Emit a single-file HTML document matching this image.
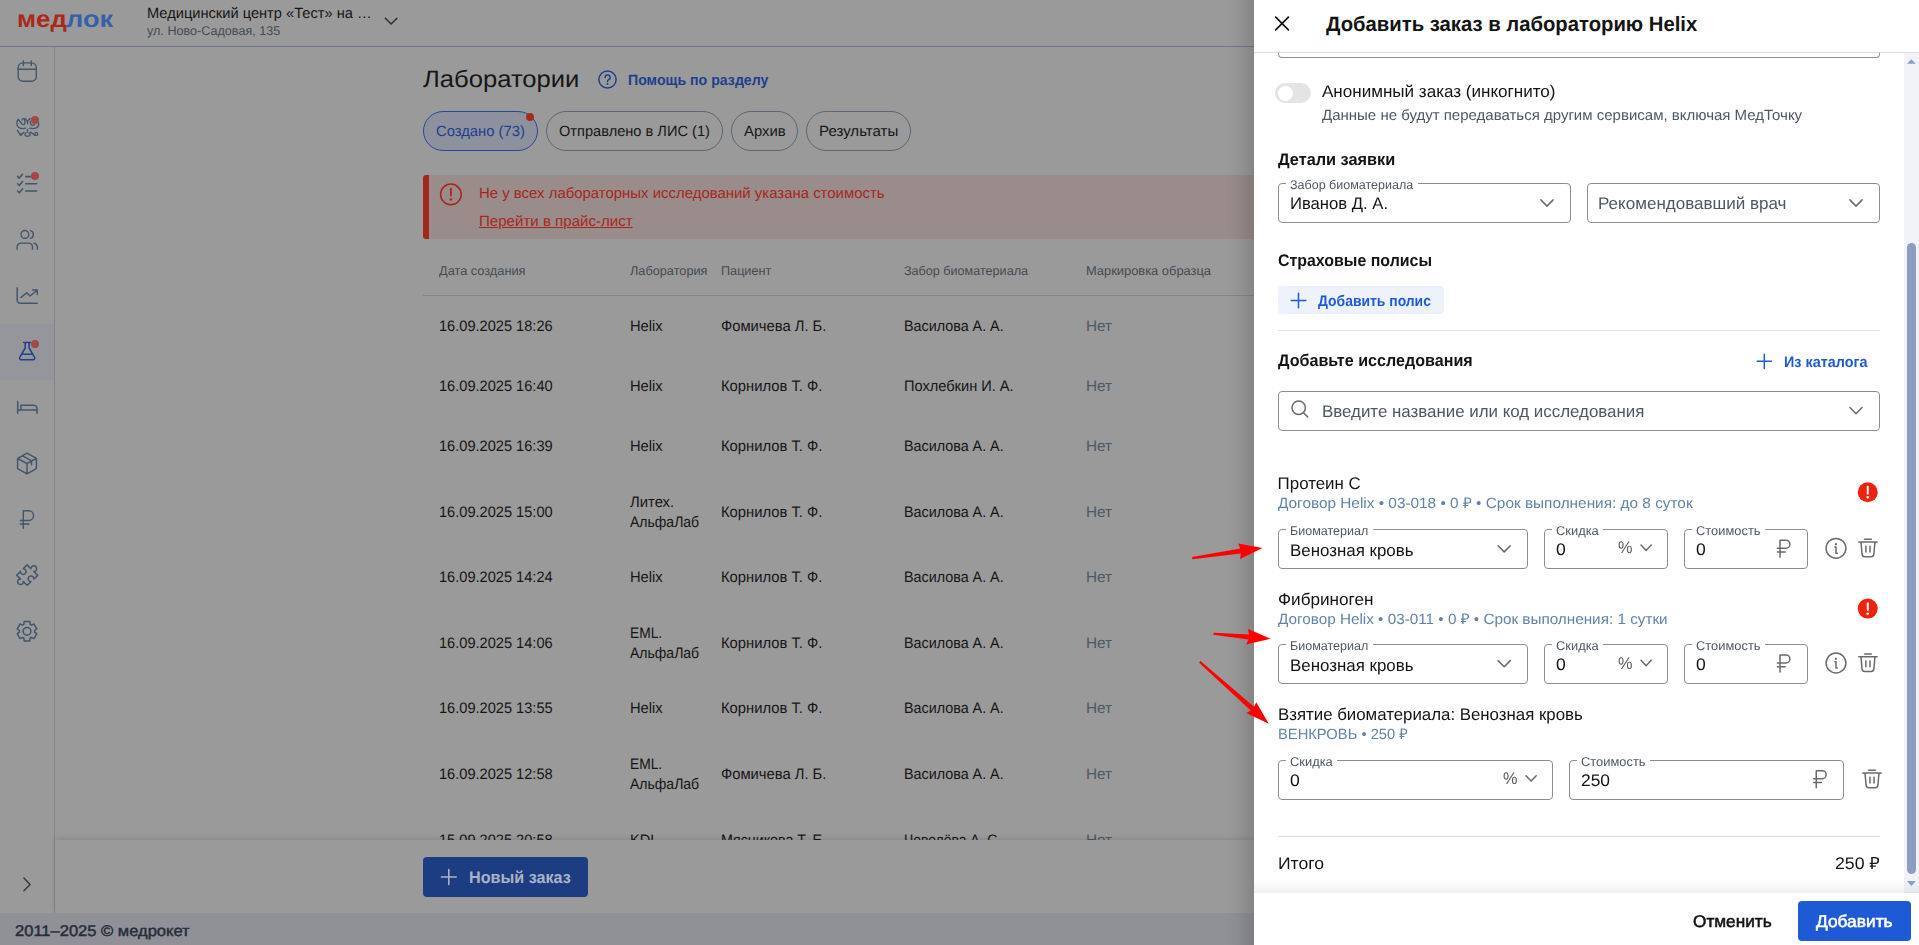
<!DOCTYPE html>
<html lang="ru"><head><meta charset="utf-8"><title>МедЛок — Лаборатории</title>
<style>
html,body{margin:0;padding:0;}
body{width:1919px;height:945px;overflow:hidden;position:relative;background:#9a9a9a;font-family:"Liberation Sans",sans-serif;}
.t{position:absolute;white-space:nowrap;line-height:1;transform-origin:0 0;display:block;text-rendering:geometricPrecision;}
.a{position:absolute;box-sizing:border-box;}
.g{position:absolute;left:0;top:0;width:0;height:0;will-change:transform;}
.g0{position:absolute;left:0;top:0;width:0;height:0;}
.pill{position:absolute;box-sizing:border-box;height:40px;top:111px;border:1px solid #5d6673;border-radius:20px;}
.fld{position:absolute;box-sizing:border-box;height:40px;border:1px solid #8d8d8d;border-radius:4px;background:#fff;}
.notch{position:absolute;height:3px;background:#fff;}
svg{position:absolute;left:0;top:0;overflow:visible;}
</style></head>
<body>
<!-- ===== dimmed application behind the drawer ===== -->
<div class="a" style="left:0;top:46px;width:1254px;height:1px;background:#6d7a92"></div>
<div class="a" style="left:0;top:324px;width:54px;height:56px;background:#94969b"></div>
<div class="a" style="left:54px;top:47px;width:1px;height:866px;background:#83868b"></div>
<div class="pill" style="left:423px;width:115px;border-color:#27489b;background:#8c919d"></div>
<div class="pill" style="left:546px;width:177px"></div>
<div class="pill" style="left:731px;width:67px"></div>
<div class="pill" style="left:806px;width:105px"></div>
<div class="a" style="left:526px;top:113px;width:8px;height:8px;border-radius:4px;background:#a8281d"></div>
<div class="a" style="left:423px;top:175px;width:831px;height:64px;background:#998c8b;border-left:6px solid #a3271c;border-radius:3px 0 0 3px"></div>
<div class="a" style="left:423px;top:295px;width:831px;height:1px;background:#868686"></div>
<div class="g0">
<span class="t" style="left:147.00px;top:6.75px;font-size:14.8px;color:#161616;transform:scaleX(0.9892);">Медицинский центр «Тест» на …</span>
<span class="t" style="left:147.00px;top:25.00px;font-size:12.7px;color:#454a52;transform:scaleX(0.9931);">ул. Ново-Садовая, 135</span>
<span class="t" style="left:16.60px;top:9.30px;font-size:23.6px;color:#ab281b;font-weight:bold;transform:scaleX(1.0934);">мед</span>
<span class="t" style="left:65.70px;top:9.30px;font-size:23.6px;color:#3760a9;font-weight:bold;transform:scaleX(1.1542);">лок</span>
<span class="t" style="left:423.40px;top:69.30px;font-size:23.7px;color:#161616;transform:scaleX(1.0811);">Лаборатории</span>
<span class="t" style="left:627.60px;top:73.00px;font-size:15.0px;color:#1f3f8c;font-weight:bold;transform:scaleX(0.9427);">Помощь по разделу</span>
<span class="t" style="left:436.00px;top:125.00px;font-size:14.8px;color:#1f3f8c;">Создано (73)</span>
<span class="t" style="left:558.80px;top:125.00px;font-size:14.8px;color:#161616;transform:scaleX(0.9871);">Отправлено в ЛИС (1)</span>
<span class="t" style="left:743.80px;top:125.00px;font-size:14.8px;color:#161616;transform:scaleX(1.0041);">Архив</span>
<span class="t" style="left:818.80px;top:125.00px;font-size:14.8px;color:#161616;transform:scaleX(1.0173);">Результаты</span>
<span class="t" style="left:478.50px;top:187.20px;font-size:14.9px;color:#a8271c;transform:scaleX(1.0028);">Не у всех лабораторных исследований указана стоимость</span>
<span class="t" style="left:478.50px;top:214.80px;font-size:14.9px;color:#a8271c;text-decoration:underline;text-underline-offset:1px;text-decoration-thickness:1px;transform:scaleX(1.0121);">Перейти в прайс-лист</span>
<span class="t" style="left:438.80px;top:265.00px;font-size:12.7px;color:#454a52;transform:scaleX(1.0061);">Дата создания</span>
<span class="t" style="left:629.50px;top:265.00px;font-size:12.7px;color:#454a52;transform:scaleX(1.0030);">Лаборатория</span>
<span class="t" style="left:721.00px;top:265.00px;font-size:12.7px;color:#454a52;transform:scaleX(0.9971);">Пациент</span>
<span class="t" style="left:903.80px;top:265.00px;font-size:12.7px;color:#454a52;transform:scaleX(0.9927);">Забор биоматериала</span>
<span class="t" style="left:1085.60px;top:265.00px;font-size:12.7px;color:#454a52;transform:scaleX(1.0149);">Маркировка образца</span>
<span class="t" style="left:438.60px;top:319.25px;font-size:15.2px;color:#161616;transform:scaleX(0.9612);">16.09.2025 18:26</span>
<span class="t" style="left:630.10px;top:319.25px;font-size:15.2px;color:#161616;transform:scaleX(0.9673);">Helix</span>
<span class="t" style="left:721.10px;top:319.25px;font-size:15.2px;color:#161616;transform:scaleX(0.9721);">Фомичева Л. Б.</span>
<span class="t" style="left:903.60px;top:319.25px;font-size:15.2px;color:#161616;transform:scaleX(0.9435);">Василова А. А.</span>
<span class="t" style="left:1085.60px;top:319.25px;font-size:15.2px;color:#4e5965;transform:scaleX(1.0111);">Нет</span>
<span class="t" style="left:438.60px;top:379.25px;font-size:15.2px;color:#161616;transform:scaleX(0.9612);">16.09.2025 16:40</span>
<span class="t" style="left:630.10px;top:379.25px;font-size:15.2px;color:#161616;transform:scaleX(0.9673);">Helix</span>
<span class="t" style="left:721.10px;top:379.25px;font-size:15.2px;color:#161616;transform:scaleX(0.9734);">Корнилов Т. Ф.</span>
<span class="t" style="left:903.60px;top:379.25px;font-size:15.2px;color:#161616;transform:scaleX(0.9614);">Похлебкин И. А.</span>
<span class="t" style="left:1085.60px;top:379.25px;font-size:15.2px;color:#4e5965;transform:scaleX(1.0111);">Нет</span>
<span class="t" style="left:438.60px;top:439.25px;font-size:15.2px;color:#161616;transform:scaleX(0.9612);">16.09.2025 16:39</span>
<span class="t" style="left:630.10px;top:439.25px;font-size:15.2px;color:#161616;transform:scaleX(0.9673);">Helix</span>
<span class="t" style="left:721.10px;top:439.25px;font-size:15.2px;color:#161616;transform:scaleX(0.9734);">Корнилов Т. Ф.</span>
<span class="t" style="left:903.60px;top:439.25px;font-size:15.2px;color:#161616;transform:scaleX(0.9435);">Василова А. А.</span>
<span class="t" style="left:1085.60px;top:439.25px;font-size:15.2px;color:#4e5965;transform:scaleX(1.0111);">Нет</span>
<span class="t" style="left:438.60px;top:505.25px;font-size:15.2px;color:#161616;transform:scaleX(0.9612);">16.09.2025 15:00</span>
<span class="t" style="left:630.10px;top:495.25px;font-size:15.2px;color:#161616;transform:scaleX(0.9776);">Литех.</span>
<span class="t" style="left:630.10px;top:515.00px;font-size:15.2px;color:#161616;transform:scaleX(0.9225);">АльфаЛаб</span>
<span class="t" style="left:721.10px;top:505.25px;font-size:15.2px;color:#161616;transform:scaleX(0.9734);">Корнилов Т. Ф.</span>
<span class="t" style="left:903.60px;top:505.25px;font-size:15.2px;color:#161616;transform:scaleX(0.9435);">Василова А. А.</span>
<span class="t" style="left:1085.60px;top:505.25px;font-size:15.2px;color:#4e5965;transform:scaleX(1.0111);">Нет</span>
<span class="t" style="left:438.60px;top:570.25px;font-size:15.2px;color:#161616;transform:scaleX(0.9612);">16.09.2025 14:24</span>
<span class="t" style="left:630.10px;top:570.25px;font-size:15.2px;color:#161616;transform:scaleX(0.9673);">Helix</span>
<span class="t" style="left:721.10px;top:570.25px;font-size:15.2px;color:#161616;transform:scaleX(0.9734);">Корнилов Т. Ф.</span>
<span class="t" style="left:903.60px;top:570.25px;font-size:15.2px;color:#161616;transform:scaleX(0.9435);">Василова А. А.</span>
<span class="t" style="left:1085.60px;top:570.25px;font-size:15.2px;color:#4e5965;transform:scaleX(1.0111);">Нет</span>
<span class="t" style="left:438.60px;top:636.00px;font-size:15.2px;color:#161616;transform:scaleX(0.9612);">16.09.2025 14:06</span>
<span class="t" style="left:630.10px;top:626.00px;font-size:15.2px;color:#161616;transform:scaleX(0.9072);">EML.</span>
<span class="t" style="left:630.10px;top:645.75px;font-size:15.2px;color:#161616;transform:scaleX(0.9225);">АльфаЛаб</span>
<span class="t" style="left:721.10px;top:636.00px;font-size:15.2px;color:#161616;transform:scaleX(0.9734);">Корнилов Т. Ф.</span>
<span class="t" style="left:903.60px;top:636.00px;font-size:15.2px;color:#161616;transform:scaleX(0.9435);">Василова А. А.</span>
<span class="t" style="left:1085.60px;top:636.00px;font-size:15.2px;color:#4e5965;transform:scaleX(1.0111);">Нет</span>
<span class="t" style="left:438.60px;top:701.00px;font-size:15.2px;color:#161616;transform:scaleX(0.9612);">16.09.2025 13:55</span>
<span class="t" style="left:630.10px;top:701.00px;font-size:15.2px;color:#161616;transform:scaleX(0.9673);">Helix</span>
<span class="t" style="left:721.10px;top:701.00px;font-size:15.2px;color:#161616;transform:scaleX(0.9734);">Корнилов Т. Ф.</span>
<span class="t" style="left:903.60px;top:701.00px;font-size:15.2px;color:#161616;transform:scaleX(0.9435);">Василова А. А.</span>
<span class="t" style="left:1085.60px;top:701.00px;font-size:15.2px;color:#4e5965;transform:scaleX(1.0111);">Нет</span>
<span class="t" style="left:438.60px;top:767.00px;font-size:15.2px;color:#161616;transform:scaleX(0.9612);">16.09.2025 12:58</span>
<span class="t" style="left:630.10px;top:757.00px;font-size:15.2px;color:#161616;transform:scaleX(0.9072);">EML.</span>
<span class="t" style="left:630.10px;top:776.75px;font-size:15.2px;color:#161616;transform:scaleX(0.9225);">АльфаЛаб</span>
<span class="t" style="left:721.10px;top:767.00px;font-size:15.2px;color:#161616;transform:scaleX(0.9721);">Фомичева Л. Б.</span>
<span class="t" style="left:903.60px;top:767.00px;font-size:15.2px;color:#161616;transform:scaleX(0.9435);">Василова А. А.</span>
<span class="t" style="left:1085.60px;top:767.00px;font-size:15.2px;color:#4e5965;transform:scaleX(1.0111);">Нет</span>
<span class="t" style="left:438.60px;top:832.50px;font-size:15.2px;color:#161616;transform:scaleX(0.9612);">15.09.2025 20:58</span>
<span class="t" style="left:630.10px;top:832.50px;font-size:15.2px;color:#161616;transform:scaleX(0.9616);">KDL</span>
<span class="t" style="left:721.10px;top:832.50px;font-size:15.2px;color:#161616;transform:scaleX(0.9405);">Мясникова Т. Е.</span>
<span class="t" style="left:903.60px;top:832.50px;font-size:15.2px;color:#161616;transform:scaleX(0.9176);">Чевелёва А. С.</span>
<span class="t" style="left:1085.60px;top:832.50px;font-size:15.2px;color:#4e5965;transform:scaleX(1.0111);">Нет</span>
</div>
<div class="a" style="left:55px;top:840px;width:1199px;height:73px;background:#9a9a9a;box-shadow:0 -1px 5px rgba(0,0,0,.13)"></div>
<div class="a" style="left:423px;top:857px;width:165px;height:40px;border-radius:4px;background:#1d3d82"></div>
<div class="a" style="left:0;top:913px;width:1254px;height:32px;background:#8f9197"></div>
<div class="g0">
<span class="t" style="left:468.60px;top:869.75px;font-size:16.9px;color:#aab3c6;font-weight:bold;transform:scaleX(0.9562);">Новый заказ</span>
<span class="t" style="left:14.80px;top:923.50px;font-size:15.4px;color:#272d3a;-webkit-text-stroke:0.45px #272d3a;transform:scaleX(1.0736);">2011–2025 © медрокет</span>
</div>
<svg width="1254" height="945" viewBox="0 0 1254 945">
<g stroke="#43566c" stroke-width="1.5" fill="none" stroke-linecap="round" stroke-linejoin="round">
<rect x="18.2" y="62.9" width="18.1" height="18.3" rx="4.8" stroke-width="1.4"/><path d="M23.35 61v4.6M31.3 61v4.6M18.2 69.2H36.3" stroke-width="1.4"/>
<path d="M17.6 176.4l1.7 1.7 3.2-3.8M17.6 183.7l1.7 1.7 3.2-3.8M17.6 191l1.7 1.7 3.2-3.8M25.8 176.6H32M25.8 183.8H36.6M25.8 191H36.6" stroke-width="1.6"/>
<g stroke-width="1.4"><circle cx="24.9" cy="234.4" r="3.9"/><path d="M17.1 249.3v-2.3a3.9 3.9 0 0 1 3.9-3.9h7.6a3.9 3.9 0 0 1 3.9 3.9v2.3M30.5 230.6a4 4 0 0 1 0 7.7M34 243.2a4.5 4.5 0 0 1 3.4 4.4v1.7"/></g>
<path d="M17.2 287.8V300a3.3 3.3 0 0 0 3.3 3.3H37.2M21 297.3l5.7-4.5 3.4 3.2 6.7-5.5M32.6 290.1h4.6v4.5"/>
<path d="M17.7 401.6V413.3M17.7 410H37M20.9 410V405.3H33.6a3.4 3.4 0 0 1 3.4 3.4V413.3"/>
<path d="M27 453.1l9.4 5.2v10.3l-9.4 5.2-9.4-5.2V458.3zM17.9 458.5L27 463.6l9.1-5.1M27 463.6v10M22.3 455.7l9.2 5.1v4"/>
<path d="M23.3 528.3V510.8h5.4a4.85 4.85 0 0 1 0 9.7H20.4M20.4 524H29"/>
<path d="M23.91 624.36 L24.18 621.60 L29.82 621.60 L30.09 624.36 L31.47 625.15 L33.99 624.01 L36.81 628.89 L34.56 630.51 L34.56 632.09 L36.81 633.71 L33.99 638.59 L31.47 637.45 L30.09 638.24 L29.82 641.00 L24.18 641.00 L23.91 638.24 L22.53 637.45 L20.01 638.59 L17.19 633.71 L19.44 632.09 L19.44 630.51 L17.19 628.89 L20.01 624.01 L22.53 625.15Z"/><circle cx="27" cy="631.3" r="3.9"/>
<path d="M23.9 878.1l6.2 6.3-6.2 6.3" stroke="#383838" stroke-width="1.4"/>
<path d="M385.3 18.2l5.8 5.8 5.8-5.8" stroke="#2e2e2e"/>
</g>
<g stroke="#20418e" stroke-width="1.5" fill="none" stroke-linecap="round" stroke-linejoin="round">
<path d="M23.6 342.5H30.7M25.2 342.5V348l-5.5 9.3a1.7 1.7 0 0 0 1.5 2.5H33.1a1.7 1.7 0 0 0 1.5-2.5L29.1 348V342.5M21.9 354.2H32.4"/>
</g>
<!-- emblem -->
<g stroke="#43566c" stroke-width="1.35" fill="none" stroke-linecap="round" stroke-linejoin="round">
<path d="M18.4 119.3C16.3 121.5 16.3 125.4 18.6 127.2C20.6 128.7 23 128.9 25.3 128.2M18.4 119.3L21.5 123.5C22.6 125.2 24.6 125.1 24.9 122.9C25.2 120.7 24.5 118.7 23.3 118.6C22.6 118.6 22.1 119.2 22 120"/>
<path d="M25 118.5L27.5 121.2L30 118.5M27.5 121.2V123.8M27.5 129.2V132.2"/>
<path d="M38.4 122.6C39 125 37.9 127.1 36.2 127.9C34.3 128.8 32 128.8 29.9 128.2M30.4 121.5C30.2 123.6 31 125.4 32.6 125.4C33.6 125.4 34.3 124.9 34.6 124.2"/>
<path d="M17.3 130.4L20.9 135.4L23.9 132.3M19.8 134.8L21.6 133.6M25.9 132.8C24.6 133.6 24.6 135.2 25.9 135.9C26.9 136.4 28.1 136.4 29.1 135.9C30.4 135.2 30.4 133.6 29.1 132.8M30.6 132.1L34.7 135.3"/>
<circle cx="36.2" cy="133.9" r="1.5"/>
</g>
<!-- puzzle -->
<path d="M27.00 564.90L30.96 568.78A2.85 2.85 0 1 1 33.74 571.52L37.70 575.40L33.87 579.01A2.85 2.85 0 1 0 31.03 581.69L27.20 585.30L23.31 581.60A2.85 2.85 0 1 1 20.49 578.90L16.60 575.20L20.41 571.42A2.85 2.85 0 1 0 23.19 568.68L27.00 564.90Z" stroke="#43566c" stroke-width="1.5" fill="none" stroke-linecap="round" stroke-linejoin="round"/>
<circle cx="35" cy="120" r="4" fill="#a44748"/><circle cx="35" cy="176" r="4" fill="#a44748"/><circle cx="35" cy="344" r="4" fill="#a44748"/>
<!-- help -->
<g stroke="#1f3f8c" stroke-width="1.5" fill="none" stroke-linecap="round" stroke-linejoin="round">
<circle cx="607.5" cy="79.5" r="8.6"/><path d="M605.1 77.4a2.5 2.5 0 1 1 3.6 2.3c-.8.4-1.2.9-1.2 1.7"/></g>
<circle cx="607.5" cy="84" r="1" fill="#1f3f8c"/>
<!-- alert icon -->
<g stroke="#a8271c" stroke-width="1.5" fill="none" stroke-linecap="round"><circle cx="450.9" cy="194.4" r="10.3"/><path d="M450.9 188.6V195.6" stroke-width="1.8"/></g>
<circle cx="450.9" cy="199.6" r="1.25" fill="#a8271c"/>

<path d="M441.40 877.00H456.20M448.80 869.60V884.40" stroke="#aab3c6" stroke-width="1.6" fill="none" stroke-linecap="round"/>
</svg>
<!-- ===== drawer ===== -->
<div class="a" style="left:1226px;top:0;width:28px;height:945px;background:linear-gradient(90deg,rgba(0,0,0,0),rgba(0,0,0,.045) 45%,rgba(0,0,0,.14))"></div>
<div class="a" style="left:1254px;top:0;width:665px;height:945px;background:#fff"></div>
<div class="a" style="left:1904px;top:53px;width:15px;height:840px;background:#f1f3f9"></div>
<div class="a" style="left:1907px;top:243px;width:9px;height:631px;border-radius:4.5px;background:#8b9ec0"></div>
<div class="a" style="left:1254px;top:52px;width:665px;height:1px;background:#dedede"></div>
<div class="a" style="left:1278px;top:47px;width:602px;height:11px;border:1px solid #8d8d8d;border-top:none;border-radius:0 0 4px 4px;box-sizing:border-box;background:#fff"></div>
<div class="a" style="left:1254px;top:46px;width:650px;height:7px;background:#fff;border-bottom:1px solid #dedede"></div>
<div class="a" style="left:1275px;top:83px;width:36px;height:20px;border-radius:10px;background:#e4e4e4"></div>
<div class="a" style="left:1278px;top:85.5px;width:15px;height:15px;border-radius:8px;background:#fff"></div>
<div class="fld" style="left:1278px;top:183px;width:293px"></div><div class="notch" style="left:1286.2px;top:182px;width:131.5px"></div><div class="fld" style="left:1587px;top:183px;width:293px"></div>
<div class="a" style="left:1278px;top:286px;width:166px;height:28px;border-radius:4px;background:#edf2fd"></div>
<div class="a" style="left:1278px;top:330px;width:602px;height:1px;background:#dcdcdc"></div>
<div class="fld" style="left:1278px;top:391px;width:602px"></div>
<div class="fld" style="left:1278px;top:529px;width:250px"></div><div class="notch" style="left:1286.2px;top:528px;width:86.5px"></div><div class="fld" style="left:1544px;top:529px;width:124px"></div><div class="notch" style="left:1552.0px;top:528px;width:51.0px"></div><div class="fld" style="left:1684px;top:529px;width:124px"></div><div class="notch" style="left:1692.0px;top:528px;width:72.8px"></div>
<div class="fld" style="left:1278px;top:644px;width:250px"></div><div class="notch" style="left:1286.2px;top:643px;width:86.5px"></div><div class="fld" style="left:1544px;top:644px;width:124px"></div><div class="notch" style="left:1552.0px;top:643px;width:51.0px"></div><div class="fld" style="left:1684px;top:644px;width:124px"></div><div class="notch" style="left:1692.0px;top:643px;width:72.8px"></div>
<div class="fld" style="left:1278px;top:760px;width:275px"></div><div class="notch" style="left:1286.2px;top:759px;width:51.0px"></div><div class="fld" style="left:1569px;top:760px;width:275px"></div><div class="notch" style="left:1577.0px;top:759px;width:72.8px"></div>
<div class="a" style="left:1278px;top:836px;width:602px;height:1px;background:#dcdcdc"></div>
<div class="a" style="left:1254px;top:875px;width:665px;height:18px;background:linear-gradient(180deg,rgba(0,0,0,0),rgba(0,0,0,.012) 35%,rgba(0,0,0,.032) 70%,rgba(0,0,0,.062))"></div>
<div class="a" style="left:1254px;top:893px;width:665px;height:52px;background:#fff"></div>
<div class="a" style="left:1798px;top:901px;width:113px;height:40px;border-radius:4px;background:#1f5ad6"></div>
<div class="g0">
<span class="t" style="left:1325.60px;top:15.25px;font-size:20.8px;color:#141414;font-weight:bold;transform:scaleX(0.9744);">Добавить заказ в лабораторию Helix</span>
</div>
<div class="g">
<span class="t" style="left:1322.00px;top:84.00px;font-size:16.9px;color:#141414;transform:scaleX(1.0093);">Анонимный заказ (инкогнито)</span>
<span class="t" style="left:1322.00px;top:109.00px;font-size:14.8px;color:#4f5764;transform:scaleX(1.0140);">Данные не будут передаваться другим сервисам, включая МедТочку</span>
<span class="t" style="left:1277.60px;top:152.00px;font-size:16.9px;color:#141414;font-weight:bold;transform:scaleX(0.9649);">Детали заявки</span>
<span class="t" style="left:1290.20px;top:179.25px;font-size:12.7px;color:#4f5764;transform:scaleX(0.9867);">Забор биоматериала</span>
<span class="t" style="left:1290.00px;top:195.75px;font-size:16.9px;color:#141414;transform:scaleX(0.9851);">Иванов Д. А.</span>
<span class="t" style="left:1598.20px;top:195.75px;font-size:16.9px;color:#4f5764;transform:scaleX(1.0084);">Рекомендовавший врач</span>
<span class="t" style="left:1277.60px;top:252.50px;font-size:16.9px;color:#141414;font-weight:bold;transform:scaleX(0.9425);">Страховые полисы</span>
<span class="t" style="left:1318.40px;top:294.00px;font-size:15.2px;color:#1f5ad6;font-weight:bold;transform:scaleX(0.9159);">Добавить полис</span>
<span class="t" style="left:1277.60px;top:353.00px;font-size:16.9px;color:#141414;font-weight:bold;transform:scaleX(0.9541);">Добавьте исследования</span>
<span class="t" style="left:1784.00px;top:355.25px;font-size:15.2px;color:#1f5ad6;font-weight:bold;transform:scaleX(0.9465);">Из каталога</span>
<span class="t" style="left:1322.00px;top:403.50px;font-size:16.9px;color:#4f5764;">Введите название или код исследования</span>
<span class="t" style="left:1277.60px;top:476.00px;font-size:16.9px;color:#141414;">Протеин С</span>
<span class="t" style="left:1277.60px;top:497.25px;font-size:14.8px;color:#6183ab;transform:scaleX(1.0382);">Договор Helix • 03-018 • 0 ₽ • Срок выполнения: до 8 суток</span>
<span class="t" style="left:1290.20px;top:525.00px;font-size:12.7px;color:#4f5764;transform:scaleX(0.9869);">Биоматериал</span>
<span class="t" style="left:1290.00px;top:542.75px;font-size:16.9px;color:#141414;">Венозная кровь</span>
<span class="t" style="left:1556.00px;top:525.00px;font-size:12.7px;color:#4f5764;transform:scaleX(1.0159);">Скидка</span>
<span class="t" style="left:1555.80px;top:541.60px;font-size:16.9px;color:#141414;transform:scaleX(1.0380);">0</span>
<span class="t" style="left:1618.40px;top:540.40px;font-size:16.9px;color:#5c5c5c;transform:scaleX(0.9656);">%</span>
<span class="t" style="left:1696.00px;top:525.00px;font-size:12.7px;color:#4f5764;transform:scaleX(1.0154);">Стоимость</span>
<span class="t" style="left:1695.80px;top:541.60px;font-size:16.9px;color:#141414;transform:scaleX(1.0380);">0</span>
<span class="t" style="left:1277.60px;top:591.50px;font-size:16.9px;color:#141414;transform:scaleX(1.0159);">Фибриноген</span>
<span class="t" style="left:1277.60px;top:612.75px;font-size:14.8px;color:#6183ab;transform:scaleX(1.0321);">Договор Helix • 03-011 • 0 ₽ • Срок выполнения: 1 сутки</span>
<span class="t" style="left:1290.20px;top:640.00px;font-size:12.7px;color:#4f5764;transform:scaleX(0.9869);">Биоматериал</span>
<span class="t" style="left:1290.00px;top:658.25px;font-size:16.9px;color:#141414;">Венозная кровь</span>
<span class="t" style="left:1556.00px;top:640.00px;font-size:12.7px;color:#4f5764;transform:scaleX(1.0159);">Скидка</span>
<span class="t" style="left:1555.80px;top:657.10px;font-size:16.9px;color:#141414;transform:scaleX(1.0380);">0</span>
<span class="t" style="left:1618.40px;top:655.90px;font-size:16.9px;color:#5c5c5c;transform:scaleX(0.9656);">%</span>
<span class="t" style="left:1696.00px;top:640.00px;font-size:12.7px;color:#4f5764;transform:scaleX(1.0154);">Стоимость</span>
<span class="t" style="left:1695.80px;top:657.10px;font-size:16.9px;color:#141414;transform:scaleX(1.0380);">0</span>
<span class="t" style="left:1277.60px;top:707.25px;font-size:16.9px;color:#141414;transform:scaleX(0.9966);">Взятие биоматериала: Венозная кровь</span>
<span class="t" style="left:1277.60px;top:728.00px;font-size:14.8px;color:#6183ab;transform:scaleX(0.9953);">ВЕНКРОВЬ • 250 ₽</span>
<span class="t" style="left:1290.20px;top:756.00px;font-size:12.7px;color:#4f5764;transform:scaleX(1.0159);">Скидка</span>
<span class="t" style="left:1290.00px;top:773.00px;font-size:16.9px;color:#141414;transform:scaleX(1.0380);">0</span>
<span class="t" style="left:1503.40px;top:771.20px;font-size:16.9px;color:#5c5c5c;transform:scaleX(0.9656);">%</span>
<span class="t" style="left:1581.00px;top:756.00px;font-size:12.7px;color:#4f5764;transform:scaleX(1.0154);">Стоимость</span>
<span class="t" style="left:1581.00px;top:773.00px;font-size:16.9px;color:#141414;transform:scaleX(1.0293);">250</span>
<span class="t" style="left:1277.60px;top:855.50px;font-size:16.9px;color:#141414;transform:scaleX(1.0395);">Итого</span>
<span class="t" style="left:1835.20px;top:855.50px;font-size:16.9px;color:#141414;transform:scaleX(1.0479);">250 ₽</span>
<span class="t" style="left:1692.80px;top:914.25px;font-size:16.9px;color:#141414;-webkit-text-stroke:0.55px #141414;transform:scaleX(1.0185);">Отменить</span>
<span class="t" style="left:1815.60px;top:914.25px;font-size:16.9px;color:#ffffff;-webkit-text-stroke:0.55px #ffffff;transform:scaleX(1.0262);">Добавить</span>
</div>
<svg width="1919" height="945" viewBox="0 0 1919 945">
<path d="M1275.7 17.1l12.7 12.7M1288.4 17.1l-12.7 12.7" stroke="#151515" stroke-width="1.7" fill="none" stroke-linecap="round"/>
<path d="M1540.90 199.90 L1547.00 206.10 L1553.10 199.90" stroke="#6a6a6a" stroke-width="1.5" fill="none" stroke-linecap="round" stroke-linejoin="round"/><path d="M1849.90 199.90 L1856.00 206.10 L1862.10 199.90" stroke="#6a6a6a" stroke-width="1.5" fill="none" stroke-linecap="round" stroke-linejoin="round"/><path d="M1849.90 407.50 L1856.00 413.70 L1862.10 407.50" stroke="#6a6a6a" stroke-width="1.5" fill="none" stroke-linecap="round" stroke-linejoin="round"/>
<path d="M1291.20 300.50H1305.80M1298.50 293.20V307.80" stroke="#1f5ad6" stroke-width="1.5" fill="none" stroke-linecap="round"/><path d="M1757.20 361.30H1771.40M1764.30 354.20V368.40" stroke="#1f5ad6" stroke-width="1.5" fill="none" stroke-linecap="round"/>
<g stroke="#6a6a6a" stroke-width="1.5" fill="none" stroke-linecap="round"><circle cx="1298.7" cy="407.8" r="6.7"/><path d="M1303.5 412.7l4.2 4.2"/></g>
<circle cx="1867.75" cy="492.25" r="10" fill="#ee230e"/><path d="M1867.75 486.85V493.65" stroke="#fff" stroke-width="2" stroke-linecap="round"/><circle cx="1867.75" cy="497.35" r="1.3" fill="#fff"/><circle cx="1867.75" cy="608.6" r="10" fill="#ee230e"/><path d="M1867.75 603.20V610.00" stroke="#fff" stroke-width="2" stroke-linecap="round"/><circle cx="1867.75" cy="613.70" r="1.3" fill="#fff"/>
<path d="M1498.10 545.70 L1504.20 551.90 L1510.30 545.70" stroke="#6a6a6a" stroke-width="1.5" fill="none" stroke-linecap="round" stroke-linejoin="round"/><path d="M1498.10 660.60 L1504.20 666.80 L1510.30 660.60" stroke="#6a6a6a" stroke-width="1.5" fill="none" stroke-linecap="round" stroke-linejoin="round"/>
<path d="M1641.00 545.00 L1646.10 550.40 L1651.20 545.00" stroke="#6a6a6a" stroke-width="1.5" fill="none" stroke-linecap="round" stroke-linejoin="round"/><path d="M1641.00 660.30 L1646.10 665.70 L1651.20 660.30" stroke="#6a6a6a" stroke-width="1.5" fill="none" stroke-linecap="round" stroke-linejoin="round"/><path d="M1526.00 775.70 L1531.10 781.10 L1536.20 775.70" stroke="#6a6a6a" stroke-width="1.5" fill="none" stroke-linecap="round" stroke-linejoin="round"/>
<path d="M1780.00 557.30V540.15H1785.90a4.0 4.0 0 0 1 0 8.0H1777.40M1777.40 551.90H1785.20" stroke="#6a6a6a" stroke-width="1.5" fill="none" stroke-linecap="round" stroke-linejoin="round"/><path d="M1780.00 672.10V654.95H1785.90a4.0 4.0 0 0 1 0 8.0H1777.40M1777.40 666.70H1785.20" stroke="#6a6a6a" stroke-width="1.5" fill="none" stroke-linecap="round" stroke-linejoin="round"/><path d="M1816.25 787.80V770.65H1822.15a4.0 4.0 0 0 1 0 8.0H1813.65M1813.65 782.40H1821.45" stroke="#6a6a6a" stroke-width="1.5" fill="none" stroke-linecap="round" stroke-linejoin="round"/>
<g stroke="#6a6a6a" stroke-width="1.5" fill="none" stroke-linecap="round" stroke-linejoin="round"><circle cx="1836" cy="548.3" r="9.9"/><path d="M1834.80 547.10H1836.00V553.30H1837.30"/></g><circle cx="1835.90" cy="544.15" r="1.15" fill="#6a6a6a"/><g stroke="#6a6a6a" stroke-width="1.5" fill="none" stroke-linecap="round" stroke-linejoin="round"><circle cx="1836" cy="663.0" r="9.9"/><path d="M1834.80 661.80H1836.00V668.00H1837.30"/></g><circle cx="1835.90" cy="658.85" r="1.15" fill="#6a6a6a"/>
<g stroke="#6a6a6a" stroke-width="1.5" fill="none" stroke-linecap="round" stroke-linejoin="round"><path d="M1858.75 542.10H1877.15M1864.55 539.25H1871.35M1860.95 542.10L1862.05 554.20Q1862.35 556.80 1864.75 556.80H1871.15Q1873.55 556.80 1873.85 554.20L1874.95 542.10M1865.90 546.30V552.10M1870.00 546.30V552.10"/></g><g stroke="#6a6a6a" stroke-width="1.5" fill="none" stroke-linecap="round" stroke-linejoin="round"><path d="M1858.75 656.80H1877.15M1864.55 653.95H1871.35M1860.95 656.80L1862.05 668.90Q1862.35 671.50 1864.75 671.50H1871.15Q1873.55 671.50 1873.85 668.90L1874.95 656.80M1865.90 661.00V666.80M1870.00 661.00V666.80"/></g><g stroke="#6a6a6a" stroke-width="1.5" fill="none" stroke-linecap="round" stroke-linejoin="round"><path d="M1862.80 773.00H1881.20M1868.60 770.15H1875.40M1865.00 773.00L1866.10 785.10Q1866.40 787.70 1868.80 787.70H1875.20Q1877.60 787.70 1877.90 785.10L1879.00 773.00M1869.95 777.20V783.00M1874.05 777.20V783.00"/></g>
<polygon points="1907,63.8 1915.8,63.8 1911.4,59.2" fill="#8b9ec1"/><polygon points="1907,881 1915.8,881 1911.4,886" fill="#8b9ec1"/>
<polygon fill="#ff0000" points="1192.41,559.19 1240.89,553.46 1240.00,559.00 1262.50,548.10 1238.10,543.40 1240.18,548.51 1192.09,557.01"/><polygon fill="#ff0000" points="1213.40,634.85 1248.45,639.42 1246.25,644.60 1270.60,638.75 1248.10,629.00 1248.89,634.44 1213.60,632.65"/><polygon fill="#ff0000" points="1199.02,662.72 1250.70,710.54 1246.25,713.10 1268.75,723.75 1256.25,702.25 1254.04,706.81 1200.48,661.08"/></svg>
</body></html>
